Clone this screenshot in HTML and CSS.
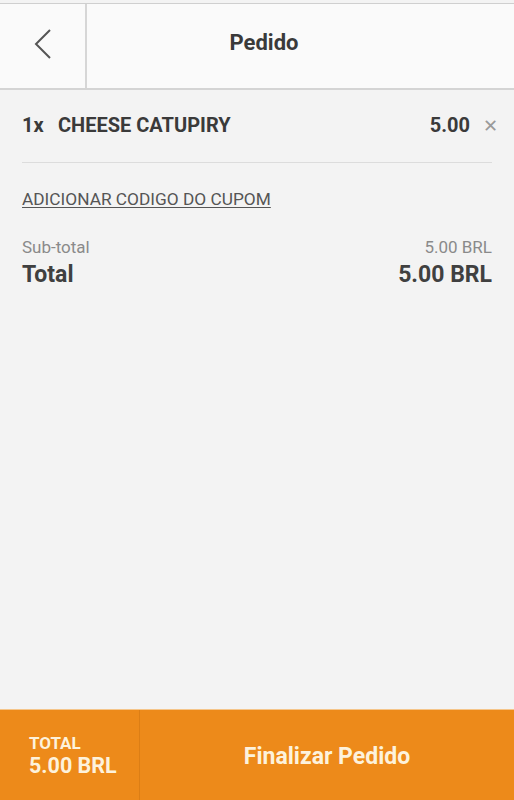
FILE: index.html
```html
<!DOCTYPE html>
<html lang="pt">
<head>
<meta charset="utf-8">
<title>Pedido</title>
<link rel="stylesheet" href="styles.css">
</head>
<body>
<div class="app">
  <header class="topbar">
    <button class="back" aria-label="Voltar">
      <svg width="18" height="30" viewBox="0 0 18 30"><path d="M16 1 L2 15 L16 29" fill="none" stroke="#555" stroke-width="2"/></svg>
    </button>
    <h1 class="title">Pedido</h1>
  </header>
  <main class="content">
    <div class="item">
      <span class="qty">1x</span>
      <span class="name">CHEESE CATUPIRY</span>
      <span class="price">5.00</span>
      <span class="remove">&#x2715;</span>
    </div>
    <hr class="divider">
    <a class="coupon" href="#">ADICIONAR CODIGO DO CUPOM</a>
    <div class="sum sub"><span>Sub-total</span><span>5.00 BRL</span></div>
    <div class="sum total"><span>Total</span><span>5.00 BRL</span></div>
  </main>
  <footer class="bottombar">
    <div class="foot-total">
      <span class="foot-label">TOTAL</span>
      <span class="foot-value">5.00 BRL</span>
    </div>
    <button class="finish">Finalizar Pedido</button>
  </footer>
</div>
</body>
</html>
```
FILE: styles.css
```css
html, body {
  margin: 0;
  padding: 0;
  height: 100%;
}
body {
  font-family: Roboto, "Liberation Sans", sans-serif;
  background: #f3f3f3;
}
.app {
  height: 800px;
  display: flex;
  flex-direction: column;
  padding-top: 3px;
  box-sizing: border-box;
  background: #f3f3f3;
}
.topbar {
  height: 84px;
  display: flex;
  background: #fafafa;
  border-top: 1px solid #cfcfcf;
  border-bottom: 2px solid #d4d4d4;
}
.back {
  width: 87px;
  border: 0;
  border-right: 2px solid #d6d6d6;
  background: transparent;
  display: flex;
  align-items: center;
  justify-content: center;
  padding: 0 0 4px 0;
}
.title {
  flex: 1;
  margin: 0;
  text-align: center;
  font-size: 22px;
  font-weight: 700;
  color: #3a3a3a;
  line-height: 78px;
  padding-right: 73px;
}
.content {
  flex: 1;
  padding: 0 22px;
}
.item {
  display: flex;
  align-items: center;
  height: 70px;
  font-size: 20px;
  font-weight: 700;
  color: #3a3a3a;
}
.qty { width: 36px; }
.name { flex: 1; }
.price { margin-right: 13px; }
.remove {
  font-size: 18px;
  font-weight: 400;
  color: #9a9a9a;
  margin-right: -6px;
}
.divider {
  margin: 2px 0 0 0;
  border: 0;
  border-top: 1px solid #dcdcdc;
}
.coupon {
  display: inline-block;
  margin-top: 26px;
  font-size: 17.3px;
  color: #555;
  text-decoration: underline;
  text-underline-offset: 2px;
}
.sum {
  display: flex;
  justify-content: space-between;
}
.sub {
  margin-top: 28px;
  font-size: 17px;
  color: #8a8a8a;
}
.total {
  margin-top: 4px;
  font-size: 23px;
  font-weight: 700;
  color: #404040;
}
.bottombar {
  height: 90px;
  display: flex;
  background: #ed8a1a;
  border-top: 1px solid #f5c58a;
}
.foot-total {
  width: 110px;
  padding-left: 29px;
  border-right: 1px solid #dc7e15;
  display: flex;
  flex-direction: column;
  justify-content: center;
  color: #fdf2dc;
  font-weight: 700;
  padding-top: 2px;
}
.foot-label { font-size: 17px; line-height: 19px; }
.foot-value { font-size: 21.5px; line-height: 25px; }
.finish {
  flex: 1;
  border: 0;
  background: transparent;
  font-family: inherit;
  font-size: 23px;
  font-weight: 700;
  color: #fdf2dc;
  padding: 2px 0 0 0;
}
```
